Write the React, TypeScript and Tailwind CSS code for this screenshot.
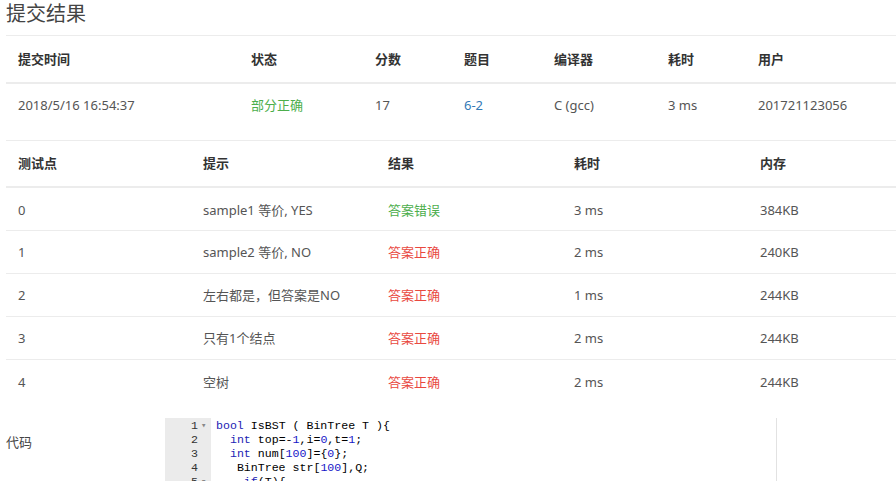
import React from 'react';

type Col = { label: string; width: string };

const SUMMARY_COLS: Col[] = [
  { label: '提交时间', width: 'w-[233px]' },
  { label: '状态', width: 'w-[124px]' },
  { label: '分数', width: 'w-[89px]' },
  { label: '题目', width: 'w-[90px]' },
  { label: '编译器', width: 'w-[114px]' },
  { label: '耗时', width: 'w-[90px]' },
  { label: '用户', width: 'w-[150px]' },
];

const CASE_COLS: Col[] = [
  { label: '测试点', width: 'w-[185px]' },
  { label: '提示', width: 'w-[185px]' },
  { label: '结果', width: 'w-[186px]' },
  { label: '耗时', width: 'w-[186px]' },
  { label: '内存', width: 'w-[148px]' },
];

const CASES = [
  { id: '0', hint: 'sample1 等价, YES', ok: false, time: '3 ms', mem: '384KB' },
  { id: '1', hint: 'sample2 等价, NO', ok: true, time: '2 ms', mem: '240KB' },
  { id: '2', hint: '左右都是，但答案是NO', ok: true, time: '1 ms', mem: '244KB' },
  { id: '3', hint: '只有1个结点', ok: true, time: '2 ms', mem: '244KB' },
  { id: '4', hint: '空树', ok: true, time: '2 ms', mem: '244KB' },
];

const KW = 'text-[#2323b4]';
const NUM = 'text-[#1717c8]';

// base cell without colour, so colour classes don't fight
const CELL = 'px-3 pt-[3px] align-middle text-[13px]';
const GRAY = 'text-[#555]';
const GREEN = 'text-[#4cae4c]';
const RED = 'text-[#e9493f]';
const LINK = 'text-[#337ab7]';

function HeadRow({ cols }: { cols: Col[] }) {
  return (
    <tr className="h-[47px] border-b-2 border-[#ececec]">
      {cols.map((c) => (
        <th
          key={c.label}
          className={`${c.width} px-3 pt-[1px] text-left align-middle text-[13px] font-bold text-[#333]`}
        >
          {c.label}
        </th>
      ))}
    </tr>
  );
}

export default function App() {
  return (
    <div className="min-h-[481px] bg-white pl-[6px] font-['Noto_Sans','Noto_Sans_CJK_SC',sans-serif]">
      <h1 className="h-[35px] text-[20px] font-normal leading-[28px] text-[#444]">提交结果</h1>

      <table className="w-[890px] table-fixed border-collapse border-t border-[#ececec]">
        <thead>
          <HeadRow cols={SUMMARY_COLS} />
        </thead>
        <tbody>
          <tr className="h-[43px]">
            <td className={`${CELL} ${GRAY}`}>2018/5/16 16:54:37</td>
            <td className={`${CELL} ${GREEN}`}>部分正确</td>
            <td className={`${CELL} ${GRAY}`}>17</td>
            <td className={`${CELL} ${LINK}`}>6-2</td>
            <td className={`${CELL} ${GRAY}`}>C (gcc)</td>
            <td className={`${CELL} ${GRAY}`}>3 ms</td>
            <td className={`${CELL} ${GRAY}`}>201721123056</td>
          </tr>
        </tbody>
      </table>

      <table className="mt-[14px] w-[890px] table-fixed border-collapse border-t border-[#ececec]">
        <thead>
          <HeadRow cols={CASE_COLS} />
        </thead>
        <tbody>
          {CASES.map((c, i) => (
            <tr
              key={c.id}
              className={`h-[43px] ${i < CASES.length - 1 ? 'border-b border-[#ececec]' : ''}`}
            >
              <td className={`${CELL} ${GRAY}`}>{c.id}</td>
              <td className={`${CELL} ${GRAY}`}>{c.hint}</td>
              <td className={`${CELL} ${c.ok ? RED : GREEN}`}>{c.ok ? '答案正确' : '答案错误'}</td>
              <td className={`${CELL} ${GRAY}`}>{c.time}</td>
              <td className={`${CELL} ${GRAY}`}>{c.mem}</td>
            </tr>
          ))}
        </tbody>
      </table>

      <div className="mt-[16px] flex">
        <div className="w-[159px] pt-[15px] text-[13px] text-[#444]">代码</div>
        <div className="flex h-[70px] w-[612px] overflow-hidden border-r border-[#e2e2e2] font-['Liberation_Mono',monospace] text-[11.6px] leading-[14px]">
          <div className="w-[46px] bg-[#ebebeb] pt-[1px] text-[#333]">
            {['1', '2', '3', '4', '5'].map((n, i) => (
              <div key={n} className="flex justify-end">
                <span>{n}</span>
                <span className="w-[13px] pl-[3px] text-[9px] text-[#888]">{i === 0 || i === 4 ? '▾' : ''}</span>
              </div>
            ))}
          </div>
          <div className="whitespace-pre pl-[5px] pt-[1px] text-[#000]">
            <div>
              <span className={KW}>bool</span> IsBST ( BinTree T ){'{'}
            </div>
            <div>
              {'  '}
              <span className={KW}>int</span> top=-<span className={NUM}>1</span>,i=<span className={NUM}>0</span>,t=<span className={NUM}>1</span>;
            </div>
            <div>
              {'  '}
              <span className={KW}>int</span> num[<span className={NUM}>100</span>]={'{'}
              <span className={NUM}>0</span>
              {'};'}
            </div>
            <div>
              {'   '}BinTree str[<span className={NUM}>100</span>],Q;
            </div>
            <div>
              {'    '}
              <span className={KW}>if</span>(T){'{'}
            </div>
          </div>
        </div>
      </div>
    </div>
  );
}
